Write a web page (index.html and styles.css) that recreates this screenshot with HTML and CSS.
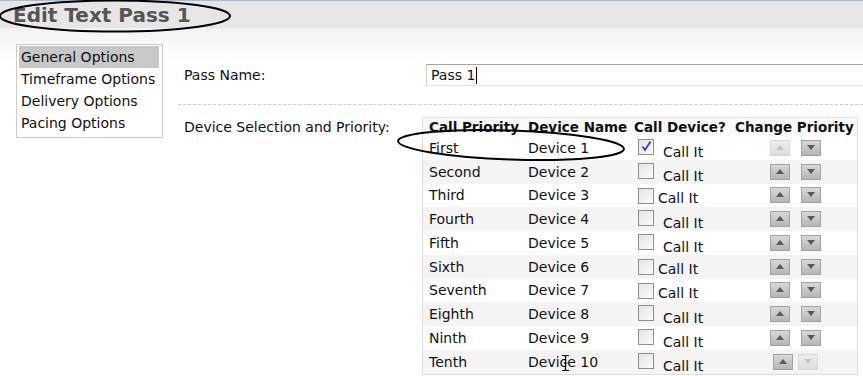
FILE: index.html
```html
<!DOCTYPE html>
<html lang="en">
<head>
    <meta charset="UTF-8">
    <title>Edit Text Pass 1</title>
    <link rel="stylesheet" href="styles.css">
</head>
<body>
    <div class="topbar">
        <h1 class="title">Edit Text Pass 1</h1>
    </div>
    <div class="page">
        <ul class="nav">
            <li class="selected">General Options</li>
            <li>Timeframe Options</li>
            <li>Delivery Options</li>
            <li>Pacing Options</li>
        </ul>
        <div class="form">
            <div class="form-row name-row">
                <label class="label">Pass Name:</label>
                <div class="text-input">Pass 1<span class="caret"></span></div>
            </div>
            <div class="form-row device-row">
                <label class="label">Device Selection and Priority:</label>
                <table class="devices">
                    <thead>
                        <tr>
                            <th class="c1">Call Priority</th>
                            <th class="c2">Device Name</th>
                            <th class="c3">Call Device?</th>
                            <th class="c4">Change Priority</th>
                        </tr>
                    </thead>
                    <tbody>
                        <tr>
                            <td class="c1">First</td><td class="c2">Device 1</td>
                            <td class="c3"><span class="call wide"><span class="box checked"><svg width="13" height="13" viewBox="0 0 13 13"><path d="M2.5 6.5 L5 10 L10.5 1.5" fill="none" stroke="#3a55a8" stroke-width="2"/></svg></span><span class="call-text">Call It</span></span></td>
                            <td class="c4"><span class="arrows"><span class="arrow up off"></span><span class="arrow down"></span></span></td>
                        </tr>
                        <tr>
                            <td class="c1">Second</td><td class="c2">Device 2</td>
                            <td class="c3"><span class="call wide"><span class="box"></span><span class="call-text">Call It</span></span></td>
                            <td class="c4"><span class="arrows"><span class="arrow up"></span><span class="arrow down"></span></span></td>
                        </tr>
                        <tr>
                            <td class="c1">Third</td><td class="c2">Device 3</td>
                            <td class="c3"><span class="call"><span class="box"></span><span class="call-text">Call It</span></span></td>
                            <td class="c4"><span class="arrows"><span class="arrow up"></span><span class="arrow down"></span></span></td>
                        </tr>
                        <tr>
                            <td class="c1">Fourth</td><td class="c2">Device 4</td>
                            <td class="c3"><span class="call wide"><span class="box"></span><span class="call-text">Call It</span></span></td>
                            <td class="c4"><span class="arrows"><span class="arrow up"></span><span class="arrow down"></span></span></td>
                        </tr>
                        <tr>
                            <td class="c1">Fifth</td><td class="c2">Device 5</td>
                            <td class="c3"><span class="call wide"><span class="box"></span><span class="call-text">Call It</span></span></td>
                            <td class="c4"><span class="arrows"><span class="arrow up"></span><span class="arrow down"></span></span></td>
                        </tr>
                        <tr>
                            <td class="c1">Sixth</td><td class="c2">Device 6</td>
                            <td class="c3"><span class="call"><span class="box"></span><span class="call-text">Call It</span></span></td>
                            <td class="c4"><span class="arrows"><span class="arrow up"></span><span class="arrow down"></span></span></td>
                        </tr>
                        <tr>
                            <td class="c1">Seventh</td><td class="c2">Device 7</td>
                            <td class="c3"><span class="call"><span class="box"></span><span class="call-text">Call It</span></span></td>
                            <td class="c4"><span class="arrows"><span class="arrow up"></span><span class="arrow down"></span></span></td>
                        </tr>
                        <tr>
                            <td class="c1">Eighth</td><td class="c2">Device 8</td>
                            <td class="c3"><span class="call wide"><span class="box"></span><span class="call-text">Call It</span></span></td>
                            <td class="c4"><span class="arrows"><span class="arrow up"></span><span class="arrow down"></span></span></td>
                        </tr>
                        <tr>
                            <td class="c1">Ninth</td><td class="c2">Device 9</td>
                            <td class="c3"><span class="call wide"><span class="box"></span><span class="call-text">Call It</span></span></td>
                            <td class="c4"><span class="arrows"><span class="arrow up"></span><span class="arrow down"></span></span></td>
                        </tr>
                        <tr>
                            <td class="c1">Tenth</td><td class="c2 last-device">Device 10<svg class="ibeam" width="9" height="18" viewBox="0 0 9 18"><path d="M1 1.5 H3.5 L4.5 2.5 L5.5 1.5 H8 M4.5 2.5 V15.5 M1 16.5 H3.5 L4.5 15.5 L5.5 16.5 H8 M2.5 9 H6.5" fill="none" stroke="#000" stroke-width="1.2"/></svg></td>
                            <td class="c3"><span class="call wide"><span class="box"></span><span class="call-text">Call It</span></span></td>
                            <td class="c4"><span class="arrows close"><span class="arrow up"></span><span class="arrow down off"></span></span></td>
                        </tr>
                    </tbody>
                </table>
            </div>
        </div>
    </div>

    <!-- hand drawn annotation rings -->
    <svg class="marks" width="863" height="376" viewBox="0 0 863 376">
        <ellipse cx="115" cy="16" rx="115" ry="15.5" fill="none" stroke="#000" stroke-width="2"/>
        <ellipse cx="511" cy="145" rx="113" ry="14.5" transform="rotate(2 511 145)" fill="none" stroke="#000" stroke-width="2"/>
    </svg>
</body>
</html>
```

FILE: styles.css
```css
body {
    margin: 0;
    font-family: 'DejaVu Sans', Verdana, sans-serif;
    font-size: 14px;
    color: #111;
    background: #fff;
    position: relative;
    overflow: hidden;
    height: 376px;
}

.topbar {
    height: 27px;
    border-top: 1px solid #a9bcd4;
    background: #e6e6e6;
}

.title {
    margin: 0;
    padding-left: 13px;
    font-size: 20px;
    line-height: 28px;
    font-weight: bold;
    color: #555;
}

.page {
    display: flex;
    gap: 15px;
    padding: 16px 0 0 16px;
    background: linear-gradient(#f2f2f2, #fff 34px);
}

.nav {
    list-style: none;
    margin: 0;
    padding: 1px 3px 3px 2px;
    width: 140px;
    height: 88px;
    border: 1px solid #ccc;
    background: #fff;
    flex: none;
}

.nav li {
    height: 22px;
    line-height: 22px;
    padding-left: 2px;
    white-space: nowrap;
}

.nav li.selected {
    background: #c8c8c8;
}

.form {
    flex: 1;
    padding-top: 20px;
}

.form-row {
    display: flex;
}

.label {
    width: 238px;
    padding-left: 6px;
    flex: none;
}

.name-row {
    padding-bottom: 18px;
    border-bottom: 1px dashed #ccc;
}

.name-row .label {
    line-height: 22px;
}

.text-input {
    flex: 1;
    margin-left: 4px;
    height: 20px;
    line-height: 20px;
    padding-left: 4px;
    border-top: 1px solid #a4a4a4;
    border-left: 1px solid #d4d4d4;
    border-bottom: 1px solid #dce3ea;
    background: #fff;
}

.caret {
    display: inline-block;
    width: 1px;
    height: 17px;
    margin-left: 1px;
    vertical-align: -4px;
    background: #000;
}

.device-row {
    margin-top: 12px;
}

.device-row .label {
    padding-top: 2px;
}

.devices {
    border-collapse: collapse;
    table-layout: fixed;
    width: 436px;
    border: 1px solid #dedede;
    background: #fff;
}

.devices th {
    text-align: left;
    font-weight: bold;
    font-size: 13.5px;
    height: 18px;
    padding: 0;
    line-height: 18px;
    white-space: nowrap;
    background: #fafafa;
    border-top: 1px solid #e6e6e6;
}

.devices td {
    height: 23.75px;
    padding: 0;
    vertical-align: middle;
    white-space: nowrap;
}

.devices tbody tr:nth-child(even) {
    background: #f4f4f4;
}

.c1 {
    width: 99px;
    padding-left: 6px !important;
}

.c2 {
    width: 106px;
}

.c3 {
    width: 101px;
}

.last-device {
    position: relative;
}

.ibeam {
    position: absolute;
    left: 33px;
    top: 4px;
}

.call {
    display: flex;
    align-items: flex-start;
    padding-left: 4px;
}

.box {
    width: 14px;
    height: 14px;
    margin-top: 2px;
    border: 1px solid #8e8e8e;
    background: linear-gradient(135deg, #e4e4e4, #fbfbfb);
    margin-right: 4px;
    flex: none;
}

.box svg {
    display: block;
    margin: 0 0 0 1px;
}

.call-text {
    padding-top: 5px;
    line-height: 14px;
}

.call.wide .box {
    margin-right: 9px;
}

.call.wide .call-text {
    padding-top: 8px;
}

.arrows {
    display: flex;
    gap: 11px;
    padding-left: 35px;
}

.arrows.close {
    gap: 5px;
    padding-left: 38px;
}

.arrow {
    width: 18px;
    height: 14px;
    border: 1px solid #a2a2a2;
    background: linear-gradient(#d8d8d8, #b6b6b6);
    position: relative;
}

.arrow::before {
    content: '';
    position: absolute;
    left: 5px;
    top: 4px;
    border-left: 4px solid transparent;
    border-right: 4px solid transparent;
}

.arrow.up::before {
    border-bottom: 5px solid #5a5a5a;
}

.arrow.down::before {
    border-top: 5px solid #5a5a5a;
}

.arrow.off {
    border-color: #d8d8d8;
    background: linear-gradient(#eeeeee, #dcdcdc);
}

.arrow.off.up::before {
    border-bottom-color: #c4c4c4;
}

.arrow.off.down::before {
    border-top-color: #c4c4c4;
}

.marks {
    position: absolute;
    left: 0;
    top: 0;
    pointer-events: none;
}
```
